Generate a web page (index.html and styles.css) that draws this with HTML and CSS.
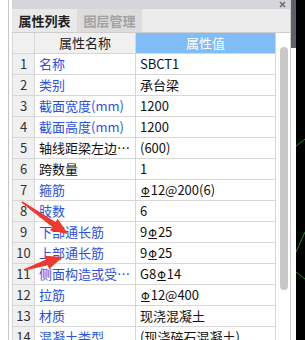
FILE: index.html
```html
<!DOCTYPE html>
<html lang="zh-CN">
<head>
    <meta charset="UTF-8">
    <title>属性列表</title>
    <link rel="stylesheet" href="styles.css">
</head>
<body>
    <div class="gutter"></div>

    <section class="panel">
        <div class="titlebar">
            <svg class="close" width="7" height="7" viewBox="0 0 7 7"><path d="M1 1L6 6M6 1L1 6" stroke="#6e6e6e" stroke-width="1.6"/></svg>
        </div>
        <div class="tabs">
            <div class="tab active">属性列表</div>
            <div class="tab">图层管理</div>
        </div>
        <div class="content">
            <div class="grid">
                <div class="row head"><div class="num"></div><div class="name">属性名称</div><div class="val">属性值</div></div>
                <div class="row"><div class="num">1</div><div class="name">名称</div><div class="val">SBCT1</div></div>
                <div class="row"><div class="num">2</div><div class="name">类别</div><div class="val">承台梁</div></div>
                <div class="row"><div class="num">3</div><div class="name">截面宽度(mm)</div><div class="val">1200</div></div>
                <div class="row"><div class="num">4</div><div class="name">截面高度(mm)</div><div class="val">1200</div></div>
                <div class="row"><div class="num">5</div><div class="name plain">轴线距梁左边线距离(mm)</div><div class="val">(600)</div></div>
                <div class="row"><div class="num">6</div><div class="name plain">跨数量</div><div class="val">1</div></div>
                <div class="row"><div class="num">7</div><div class="name">箍筋</div><div class="val"><span class="rebar">Φ</span>12@200(6)</div></div>
                <div class="row"><div class="num">8</div><div class="name">肢数</div><div class="val">6</div></div>
                <div class="row"><div class="num">9</div><div class="name">下部通长筋</div><div class="val">9<span class="rebar">Φ</span>25</div></div>
                <div class="row"><div class="num">10</div><div class="name">上部通长筋</div><div class="val">9<span class="rebar">Φ</span>25</div></div>
                <div class="row"><div class="num">11</div><div class="name">侧面构造或受扭筋(总配筋值)</div><div class="val">G8<span class="rebar">Φ</span>14</div></div>
                <div class="row"><div class="num">12</div><div class="name">拉筋</div><div class="val"><span class="rebar">Φ</span>12@400</div></div>
                <div class="row"><div class="num">13</div><div class="name">材质</div><div class="val">现浇混凝土</div></div>
                <div class="row"><div class="num">14</div><div class="name">混凝土类型</div><div class="val">(现浇碎石混凝土)</div></div>
            </div>
            <div class="scroll"><div class="thumb"></div></div>
        </div>
    </section>

    <div class="side"></div>
    <div class="canvas">
        <svg width="9" height="340" viewBox="0 0 9 340">
            <path d="M0 146L9 139M0 252L9 232M0 272L9 279" stroke="#1f8a1f" stroke-width="1"/>
        </svg>
    </div>

    <!-- annotation arrows drawn over the table -->
    <svg class="arrows" width="305" height="340" viewBox="0 0 305 340">
        <polygon fill="#ee3a2e" points="22.4,201.3 55.55,222.1 57.75,218.8 68,234 50.05,230.4 52.25,227.1 21.6,202.7"/>
        <polygon fill="#ee3a2e" points="23.75,269.24 45.95,259.55 44.7,255.8 63,257 49.1,269 47.8,265.2 24.25,270.76"/>
    </svg>
</body>
</html>
```

FILE: styles.css
```css
body {
    margin: 0;
    width: 305px;
    height: 340px;
    overflow: hidden;
    display: flex;
    position: relative;
    background: #fff;
    font-family: "Noto Sans CJK SC", sans-serif;
    font-size: 13px;
}
.gutter {
    flex: none;
    width: 8px;
    border-right: 1px solid #c8c8c8;
    margin-right: 3px;
}
.panel {
    flex: none;
    width: 278px;
    border-right: 1px solid #cfcfcf;
    display: flex;
    flex-direction: column;
}
.titlebar {
    height: 9px;
    background: #d5d6da;
    display: flex;
    justify-content: flex-end;
    align-items: center;
    padding-right: 4px;
}
.close {
    display: block;
}
.tabs {
    height: 23px;
    background: #ececec;
    border-bottom: 1px solid #cdcdcd;
    display: flex;
}
.tab {
    width: 65px;
    text-align: center;
    line-height: 23px;
    font-weight: bold;
    color: #a2a2a2;
    background: #dcdcdc;
}
.tab.active {
    color: #222;
    background: #e9e9e9;
}
.content {
    display: flex;
    flex: 1;
    min-height: 0;
}
.grid {
    flex: none;
    width: 264px;
}
.row {
    display: flex;
    height: 20px;
    line-height: 20px;
    border-bottom: 1px solid #d7d7d7;
}
.num {
    width: 21px;
    border-left: 1px solid #d7d7d7;
    border-right: 1px solid #d7d7d7;
    background: #f0f0f0;
    text-align: center;
    color: #333;
}
.name {
    width: 96px;
    padding-left: 4px;
    border-right: 1px solid #d7d7d7;
    color: #2b50e4;
    white-space: nowrap;
    overflow: hidden;
    text-overflow: ellipsis;
}
.name.plain {
    color: #111;
}
.val {
    width: 135px;
    padding-left: 4px;
    border-right: 1px solid #d7d7d7;
    color: #111;
    white-space: nowrap;
    overflow: hidden;
}
.head .name {
    width: 100px;
    padding-left: 0;
    text-align: center;
    background: #f0f0f0;
    color: #222;
}
.head .val {
    width: 139px;
    padding-left: 0;
    text-align: center;
    background: #80bdf7;
    color: #fff;
}
.rebar {
    font-family: "DejaVu Sans", sans-serif;
    font-size: 11px;
    text-decoration: underline;
    text-underline-offset: 1px;
    margin: 0 1px;
}
.scroll {
    flex: none;
    width: 14px;
}
.thumb {
    margin: 14px 0 0 4px;
    width: 8px;
    height: 243px;
    border-radius: 4px;
    background: #c8c8c8;
}
.side {
    flex: none;
    width: 5px;
    background: linear-gradient(#5c616b 48px, #fff 48px);
}
.canvas {
    flex: none;
    width: 9px;
    background: #000;
}
.canvas svg {
    display: block;
}
.arrows {
    position: absolute;
    left: 0;
    top: 0;
    pointer-events: none;
}
```
